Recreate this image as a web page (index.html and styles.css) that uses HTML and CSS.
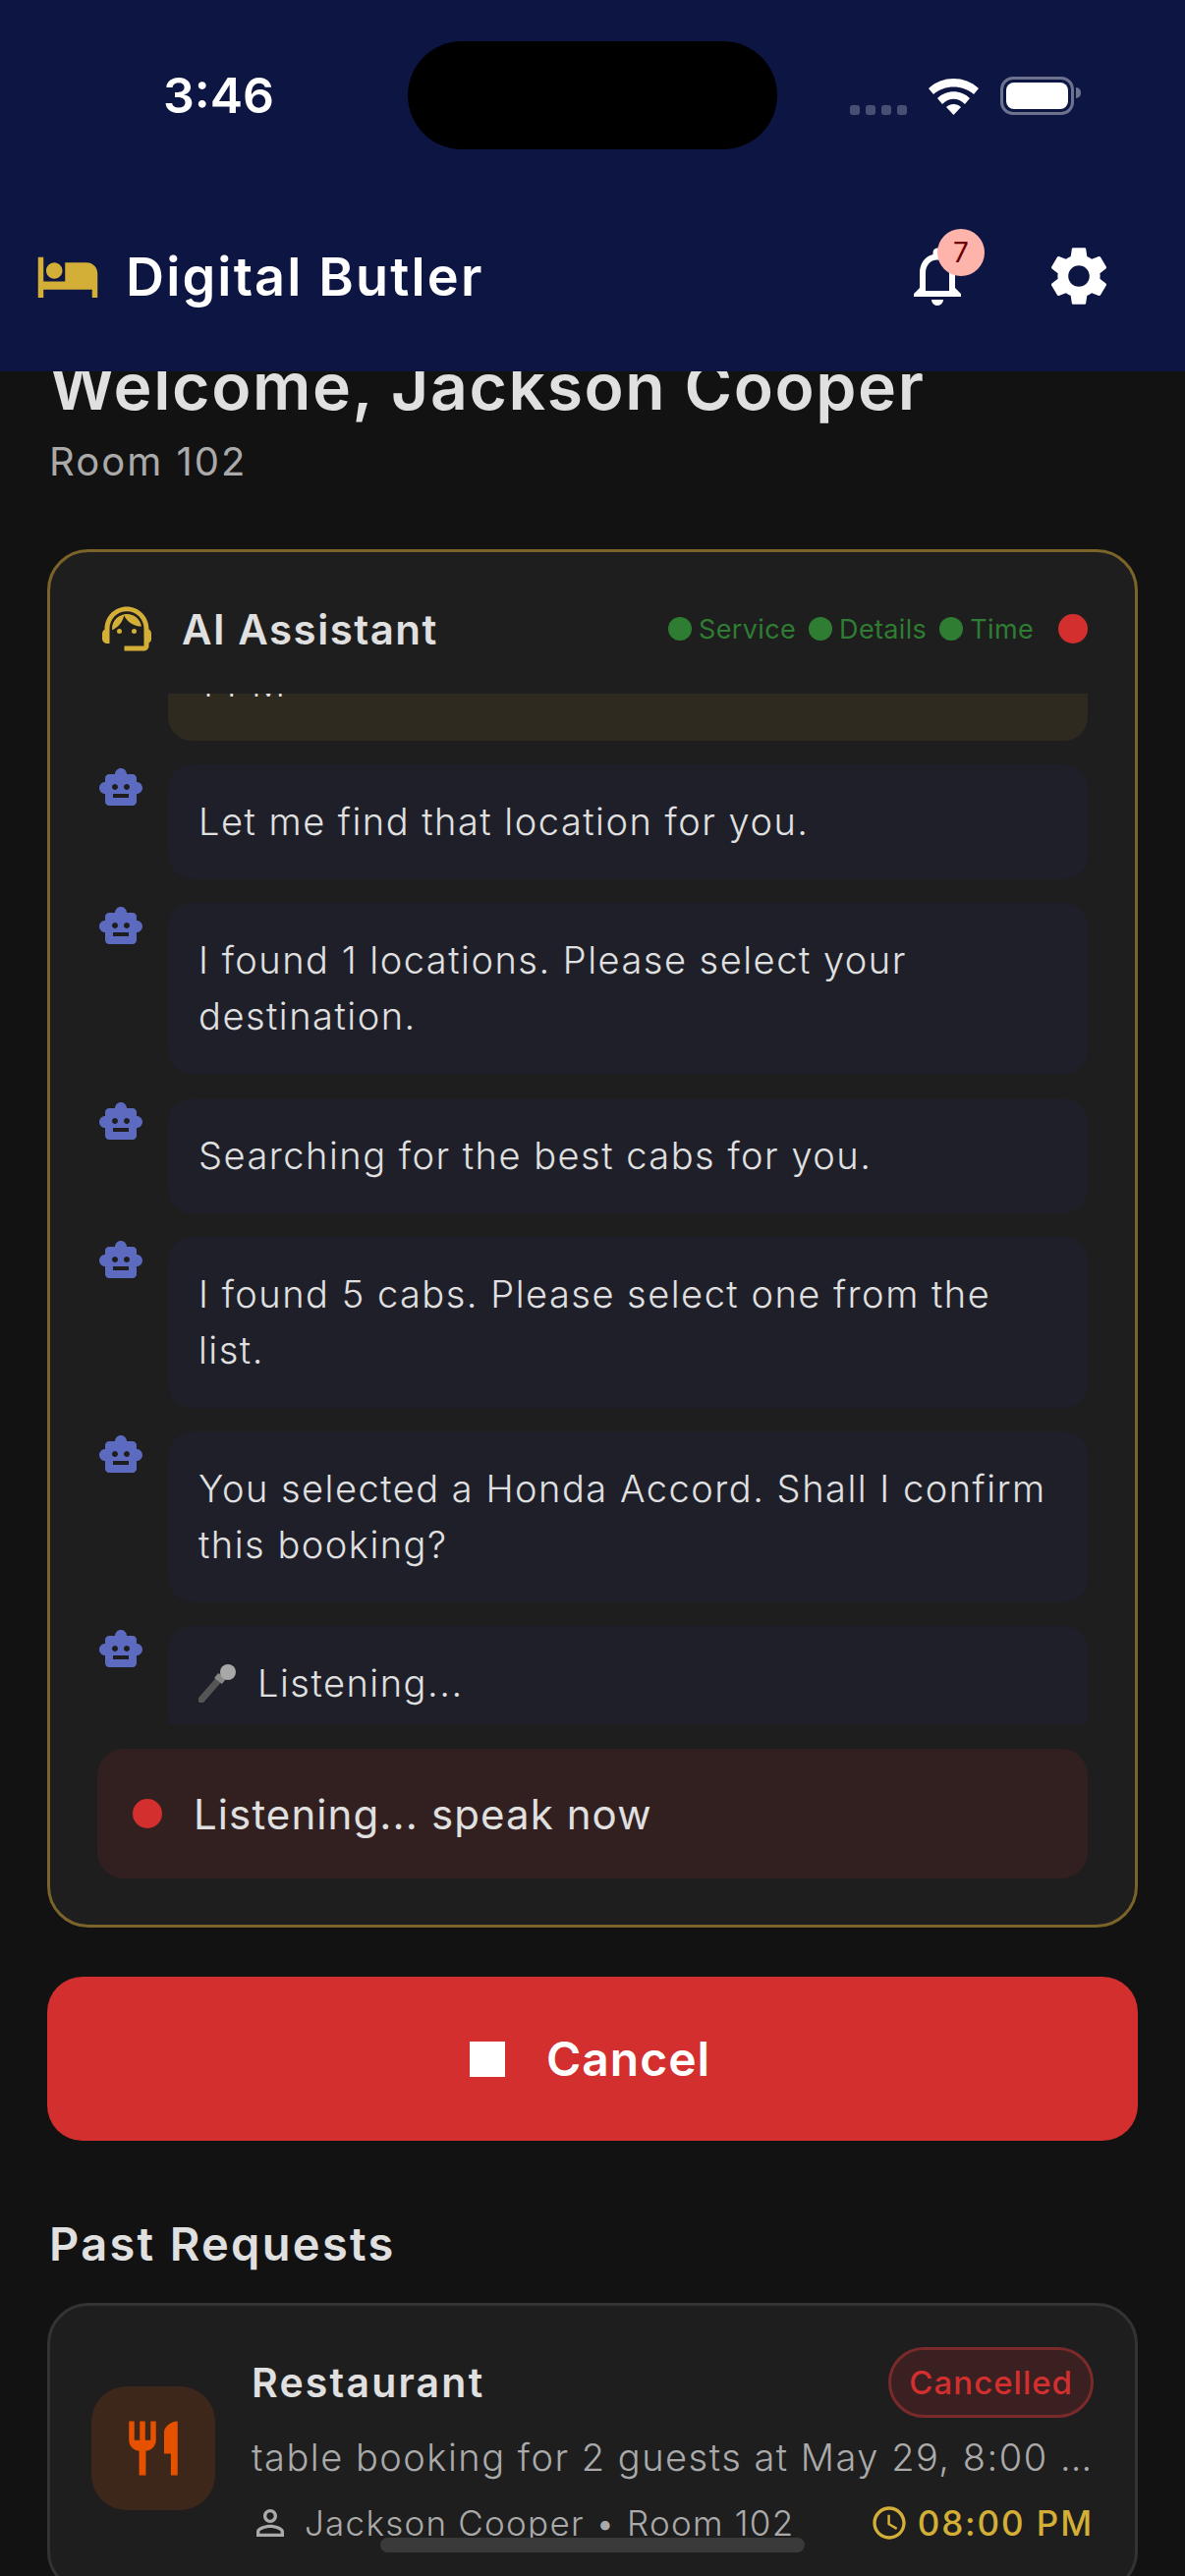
FILE: index.html
```html
<!DOCTYPE html>
<html lang="en">
<head>
  <meta charset="UTF-8">
  <meta name="viewport" content="width=device-width, initial-scale=1.0">
  <title>Digital Butler</title>
  <link rel="stylesheet" href="styles.css">
</head>
<body>
  <svg class="sprite">
    <symbol id="robot" viewBox="0 0 24 24">
      <path d="M20 9V7c0-1.1-.9-2-2-2h-3c0-1.66-1.34-3-3-3S9 3.34 9 5H6c-1.1 0-2 .9-2 2v2c-1.66 0-3 1.34-3 3s1.34 3 3 3v4c0 1.1.9 2 2 2h12c1.1 0 2-.9 2-2v-4c1.66 0 3-1.34 3-3s-1.34-3-3-3zM7.5 11.5c0-.83.67-1.5 1.5-1.5s1.5.67 1.5 1.5S9.83 13 9 13s-1.5-.67-1.5-1.5zM16 17H8v-2h8v2zm-1-4c-.83 0-1.5-.67-1.5-1.5S14.17 10 15 10s1.5.67 1.5 1.5S15.83 13 15 13z"/>
    </symbol>
  </svg>

  <header class="app-bar">
    <div class="status-bar">
      <div class="status-time">3:46</div>
      <div class="island"></div>
      <div class="status-icons">
        <div class="signal"><span></span><span></span><span></span><span></span></div>
        <svg class="wifi" viewBox="0 0 51 37"><path d="M0 10C14-3.3 37-3.3 51 10l-5 6C35 6 16 6 5 16z"/><path d="M9 20c9-9 24-9 33 0l-5 6c-7-7-16-7-23 0z"/><path d="M18 29c4-4 11-4 15 0l-7.500 8z"/></svg>
        <div class="battery"><div class="battery-fill"></div><div class="battery-cap"></div></div>
      </div>
    </div>
    <div class="toolbar">
      <svg class="icon-bed" viewBox="0 0 24 24"><path d="M7 13c1.66 0 3-1.34 3-3S8.66 7 7 7s-3 1.34-3 3 1.34 3 3 3zm12-6h-8v7H3V5H1v15h2v-3h18v3h2v-9c0-2.21-1.79-4-4-4z"/></svg>
      <div class="brand">Digital Butler</div>
      <div class="toolbar-actions">
        <div class="bell">
          <svg class="icon-action" viewBox="0 0 24 24"><path d="M12 22c1.100 0 2-.9 2-2h-4c0 1.100.89 2 2 2zm6-6v-5c0-3.070-1.640-5.640-4.500-6.320V4c0-.83-.67-1.500-1.500-1.500s-1.500.67-1.500 1.500v.68C7.630 5.360 6 7.920 6 11v5l-2 2v1h16v-1l-2-2zm-2 1H8v-6c0-2.480 1.510-4.500 4-4.500s4 2.020 4 4.500v6z"/></svg>
          <span class="bell-badge">7</span>
        </div>
        <svg class="icon-action" viewBox="0 0 24 24"><path d="M19.140 12.940c.04-.3.06-.61.06-.94 0-.32-.02-.64-.07-.94l2.030-1.580c.18-.14.23-.41.12-.61l-1.920-3.320c-.12-.22-.37-.29-.59-.22l-2.390.96c-.5-.38-1.030-.7-1.620-.94l-.36-2.540c-.04-.24-.24-.41-.48-.41h-3.840c-.24 0-.43.17-.47.41l-.36 2.540c-.59.24-1.130.57-1.620.94l-2.390-.96c-.22-.08-.47 0-.59.22L2.740 8.870c-.12.21-.08.47.12.61l2.030 1.580c-.05.3-.09.63-.09.94s.02.64.07.94l-2.030 1.580c-.18.14-.23.41-.12.61l1.920 3.320c.12.22.37.29.59.22l2.390-.96c.5.38 1.030.7 1.620.94l.36 2.540c.05.24.24.41.48.41h3.840c.24 0 .44-.17.47-.41l.36-2.540c.59-.24 1.130-.56 1.620-.94l2.390.96c.22.08.47 0 .59-.22l1.920-3.320c.12-.22.07-.47-.12-.61l-2.010-1.580zM12 15.600c-1.980 0-3.600-1.620-3.600-3.600s1.620-3.600 3.600-3.600 3.600 1.620 3.600 3.600-1.620 3.600-3.600 3.600z"/></svg>
      </div>
    </div>
  </header>

  <main class="content">
    <h1 class="welcome">Welcome, Jackson Cooper</h1>
    <p class="room">Room 102</p>

    <section class="assistant">
      <div class="assistant-head">
        <svg class="icon-agent" viewBox="0 0 24 24"><path d="M21 12.220C21 6.730 16.740 3 12 3c-4.690 0-9 3.650-9 9.280-.6.34-1 .98-1 1.720v2c0 1.100.9 2 2 2h1v-6.100c0-3.870 3.130-7 7-7s7 3.130 7 7V19h-8v2h8c1.100 0 2-.9 2-2v-1.220c.59-.31 1-.92 1-1.620v-2.300c0-.67-.41-1.280-1-1.640z"/><circle cx="9" cy="13" r="1"/><circle cx="15" cy="13" r="1"/><path d="M18 11.030C17.520 8.180 15.040 6 12.050 6c-3.030 0-6.290 2.510-6.030 6.450 2.470-1.010 4.330-3.210 4.860-5.890 1.310 2.630 4 4.440 7.120 4.470z"/></svg>
        <h2 class="assistant-title">AI Assistant</h2>
        <div class="steps">
          <div class="step"><span class="step-dot"></span>Service</div>
          <div class="step"><span class="step-dot"></span>Details</div>
          <div class="step"><span class="step-dot"></span>Time</div>
          <span class="rec-dot"></span>
        </div>
      </div>

      <div class="chat">
        <div class="chat-list">
          <div class="msg msg-user"><div class="bubble">I need a cab to the airport at<br>1 PM</div></div>
          <div class="msg"><svg class="avatar"><use href="#robot"/></svg><div class="bubble">Let me find that location for you.</div></div>
          <div class="msg"><svg class="avatar"><use href="#robot"/></svg><div class="bubble">I found 1 locations. Please select your destination.</div></div>
          <div class="msg"><svg class="avatar"><use href="#robot"/></svg><div class="bubble">Searching for the best cabs for you.</div></div>
          <div class="msg"><svg class="avatar"><use href="#robot"/></svg><div class="bubble">I found 5 cabs. Please select one from the list.</div></div>
          <div class="msg"><svg class="avatar"><use href="#robot"/></svg><div class="bubble">You selected a Honda Accord. Shall I confirm this booking?</div></div>
          <div class="msg"><svg class="avatar"><use href="#robot"/></svg><div class="bubble">
            <svg class="icon-mic" viewBox="0 0 40 40"><path class="mic-handle" d="M3 37 24 13"/><path class="mic-collar" d="M20 18l4-5"/><circle class="mic-head" cx="30" cy="9" r="8"/></svg>Listening...</div></div>
        </div>
      </div>

      <div class="listening"><span class="rec-dot"></span>Listening... speak now</div>
    </section>

    <button class="cancel-btn"><span class="stop-icon"></span>Cancel</button>

    <h2 class="section-title">Past Requests</h2>

    <article class="request">
      <div class="request-icon">
        <svg viewBox="0 0 24 24"><path d="M11 9H9V2H7v7H5V2H3v7c0 2.120 1.660 3.840 3.750 3.970V22h2.500v-9.030C11.340 12.840 13 11.120 13 9V2h-2v7zm5-3v8h2.500v8H21V2c-2.760 0-5 2.240-5 4z"/></svg>
      </div>
      <div class="request-body">
        <div class="request-top">
          <div class="request-title">Restaurant</div>
          <div class="request-status">Cancelled</div>
        </div>
        <div class="request-desc">table booking for 2 guests at May 29, 8:00 PM at the restaurant</div>
        <div class="request-meta">
          <svg class="icon-person" viewBox="0 0 24 24"><path d="M12 5.900c1.160 0 2.100.94 2.100 2.100s-.94 2.100-2.100 2.100S9.900 9.160 9.900 8s.94-2.100 2.100-2.100m0 9c2.970 0 6.100 1.460 6.100 2.100v1.100H5.900V17c0-.64 3.130-2.100 6.100-2.100M12 4C9.790 4 8 5.790 8 8s1.790 4 4 4 4-1.790 4-4-1.790-4-4-4zm0 9c-2.670 0-8 1.340-8 4v3h16v-3c0-2.660-5.330-4-8-4z"/></svg>
          <span class="request-guest">Jackson Cooper • Room 102</span>
          <span class="request-time">
            <svg class="icon-clock" viewBox="0 0 24 24"><path d="M11.990 2C6.470 2 2 6.480 2 12s4.470 10 9.990 10C17.520 22 22 17.520 22 12S17.520 2 11.990 2zM12 20c-4.420 0-8-3.580-8-8s3.580-8 8-8 8 3.580 8 8-3.580 8-8 8zm.5-13H11v6l5.250 3.150.75-1.230-4.500-2.670z"/></svg>08:00 PM</span>
        </div>
      </div>
    </article>
  </main>

  <div class="home-indicator"></div>
</body>
</html>
```

FILE: styles.css
```css
* {
  box-sizing: border-box;
}
html, body {
  margin: 0;
  padding: 0;
  height: 2622px;
  overflow: hidden;
}
body {
  background: #121212;
  color: #e0e0e0;
  font-family: 'Inter', 'Liberation Sans', sans-serif;
  display: flex;
  flex-direction: column;
}
.sprite {
  display: none;
}

/* top bar */
.app-bar {
  height: 378px;
  flex-shrink: 0;
  background: #0d1543;
  color: #fff;
}
.status-bar {
  display: grid;
  grid-template-columns: 415px 376px 415px;
  align-items: center;
  padding-top: 42px;
}
.status-time {
  padding-left: 166px;
  font-size: 50px;
  font-weight: 600;
}
.island {
  height: 110px;
  border-radius: 55px;
  background: #000;
}
.status-icons {
  display: flex;
  align-items: flex-end;
  gap: 22px;
  padding-left: 74px;
}
.signal {
  display: flex;
  gap: 6px;
}
.signal span {
  width: 10px;
  height: 10px;
  border-radius: 3px;
  background: rgba(255, 255, 255, 0.25);
}
.wifi {
  width: 51px;
  height: 37px;
  fill: #fff;
}
.battery {
  position: relative;
  width: 75px;
  height: 39px;
  padding: 3px;
  border: 3px solid rgba(255, 255, 255, 0.4);
  border-radius: 13px;
}
.battery-fill {
  height: 100%;
  border-radius: 8px;
  background: #fff;
}
.battery-cap {
  position: absolute;
  top: 8px;
  right: -10px;
  width: 5px;
  height: 11px;
  border-radius: 0 5px 5px 0;
  background: rgba(255, 255, 255, 0.4);
}
.toolbar {
  display: flex;
  align-items: center;
  height: 226px;
  padding: 32px 72px 0 36px;
}
.icon-bed {
  width: 66px;
  height: 66px;
  fill: #d4af37;
}
.brand {
  margin-left: 26px;
  font-size: 54px;
  font-weight: 600;
  letter-spacing: 2.15px;
}
.toolbar-actions {
  display: flex;
  gap: 72px;
  margin-left: auto;
}
.icon-action {
  display: block;
  width: 72px;
  height: 72px;
  fill: #fff;
}
.bell {
  position: relative;
}
.bell-badge {
  position: absolute;
  top: -12px;
  left: 36px;
  width: 48px;
  height: 48px;
  border-radius: 50%;
  background: #ffb4ab;
  color: #690005;
  font-size: 28px;
  line-height: 48px;
  text-align: center;
}

/* page body */
.content {
  flex: 1;
  min-height: 0;
  padding: 0 48px;
  overflow: hidden;
}
.welcome {
  margin: -24px 0 0 2px;
  font-size: 66px;
  font-weight: 600;
  line-height: 78px;
  letter-spacing: 1.6px;
  white-space: nowrap;
}
.room {
  margin: 14px 0 0 2px;
  color: #aaa;
  font-size: 40px;
  line-height: 48px;
  letter-spacing: 2px;
}

/* assistant card */
.assistant {
  margin-top: 65px;
  padding: 48px 48px 47px;
  border: 3px solid #7a642a;
  border-radius: 42px;
  background: #1e1e1e;
}
.assistant-head {
  display: flex;
  align-items: center;
  height: 60px;
}
.icon-agent {
  width: 60px;
  height: 60px;
  fill: #d4af37;
}
.assistant-title {
  margin: 0 0 0 26px;
  font-size: 42px;
  font-weight: 600;
  letter-spacing: 1.5px;
}
.steps {
  display: flex;
  align-items: center;
  gap: 13px;
  margin-left: auto;
  color: #2e7d32;
  font-size: 27px;
  letter-spacing: 0.35px;
}
.step {
  display: flex;
  align-items: center;
  gap: 7px;
}
.step-dot {
  width: 24px;
  height: 24px;
  border-radius: 50%;
  background: #2e7d32;
}
.rec-dot {
  width: 30px;
  height: 30px;
  flex-shrink: 0;
  border-radius: 50%;
  background: #d32f2f;
}
.steps .rec-dot {
  margin-left: 12px;
}
.chat {
  height: 1049px;
  margin-top: 36px;
  overflow: hidden;
}
.chat-list {
  display: flex;
  flex-direction: column;
  gap: 24.2px;
  margin-top: -126px;
}
.msg {
  display: flex;
  gap: 24px;
}
.msg-user {
  padding-left: 72px;
}
.msg-user .bubble {
  background: #2e2a1f;
}
.avatar {
  width: 48px;
  height: 48px;
  flex-shrink: 0;
  fill: #5c6bc0;
}
.bubble {
  flex: 1;
  padding: 30px 31px;
  border-radius: 24px;
  background: #1e1f29;
  font-size: 38px;
  font-weight: 300;
  line-height: 57px;
  letter-spacing: 1.5px;
}
.icon-mic {
  width: 40px;
  height: 40px;
  margin-right: 20px;
  vertical-align: -6px;
}
.mic-handle {
  stroke: #555;
  stroke-width: 7;
  stroke-linecap: round;
}
.mic-collar {
  stroke: #888;
  stroke-width: 10;
}
.mic-head {
  fill: #a8a8a8;
}
.listening {
  display: flex;
  align-items: center;
  gap: 32px;
  height: 132px;
  margin-top: 25px;
  padding-left: 36px;
  border-radius: 27px;
  background: #322020;
  font-size: 42px;
  letter-spacing: 1.1px;
}

/* cancel */
.cancel-btn {
  display: flex;
  align-items: center;
  justify-content: center;
  gap: 42px;
  width: 100%;
  height: 167px;
  margin-top: 50px;
  padding: 0 5px 0 0;
  border: none;
  border-radius: 36px;
  background: #d32f2f;
  color: #fff;
  font-family: inherit;
  font-size: 48px;
  font-weight: 600;
  letter-spacing: 1px;
}
.stop-icon {
  width: 36px;
  height: 36px;
  background: #fff;
}

/* past requests */
.section-title {
  margin: 78px 0 0 2px;
  font-size: 47px;
  font-weight: 600;
  line-height: 54px;
  letter-spacing: 2.3px;
}
.request {
  display: flex;
  align-items: center;
  gap: 37px;
  margin-top: 33px;
  padding: 42px;
  border: 3px solid #333;
  border-radius: 42px;
  background: #1e1e1e;
}
.request-icon {
  display: flex;
  align-items: center;
  justify-content: center;
  width: 126px;
  height: 126px;
  flex-shrink: 0;
  border-radius: 36px;
  background: #3d271b;
}
.request-icon svg {
  width: 66px;
  height: 66px;
  fill: #e65100;
}
.request-body {
  flex: 1;
  min-width: 0;
}
.request-top {
  display: flex;
  align-items: center;
  justify-content: space-between;
}
.request-title {
  font-size: 41px;
  font-weight: 600;
  letter-spacing: 2.2px;
}
.request-status {
  height: 72px;
  padding: 0 18px;
  border: 3px solid #7a2a2a;
  border-radius: 36px;
  background: #3a2020;
  color: #d32f2f;
  font-size: 33px;
  font-weight: 500;
  line-height: 66px;
  letter-spacing: 1px;
}
.request-desc {
  margin-top: 12px;
  overflow: hidden;
  color: #aaa;
  font-size: 38px;
  font-weight: 300;
  line-height: 57px;
  letter-spacing: 1.5px;
  text-overflow: ellipsis;
  white-space: nowrap;
}
.request-meta {
  display: flex;
  align-items: center;
  margin-top: 12px;
  color: #aaa;
  font-size: 35px;
  font-weight: 300;
  line-height: 52px;
  letter-spacing: 1.25px;
}
.icon-person {
  width: 42px;
  height: 42px;
  margin-left: -2px;
  fill: #aaa;
}
.request-guest {
  margin-left: 14px;
}
.request-time {
  display: flex;
  align-items: center;
  gap: 9px;
  margin-left: auto;
  color: #d4af37;
  font-weight: 500;
  letter-spacing: 1.9px;
}
.icon-clock {
  width: 40px;
  height: 40px;
  fill: #d4af37;
}
.home-indicator {
  position: absolute;
  top: 2583px;
  left: 387px;
  width: 432px;
  height: 15px;
  border-radius: 8px;
  background: #3a3a3a;
}
```
